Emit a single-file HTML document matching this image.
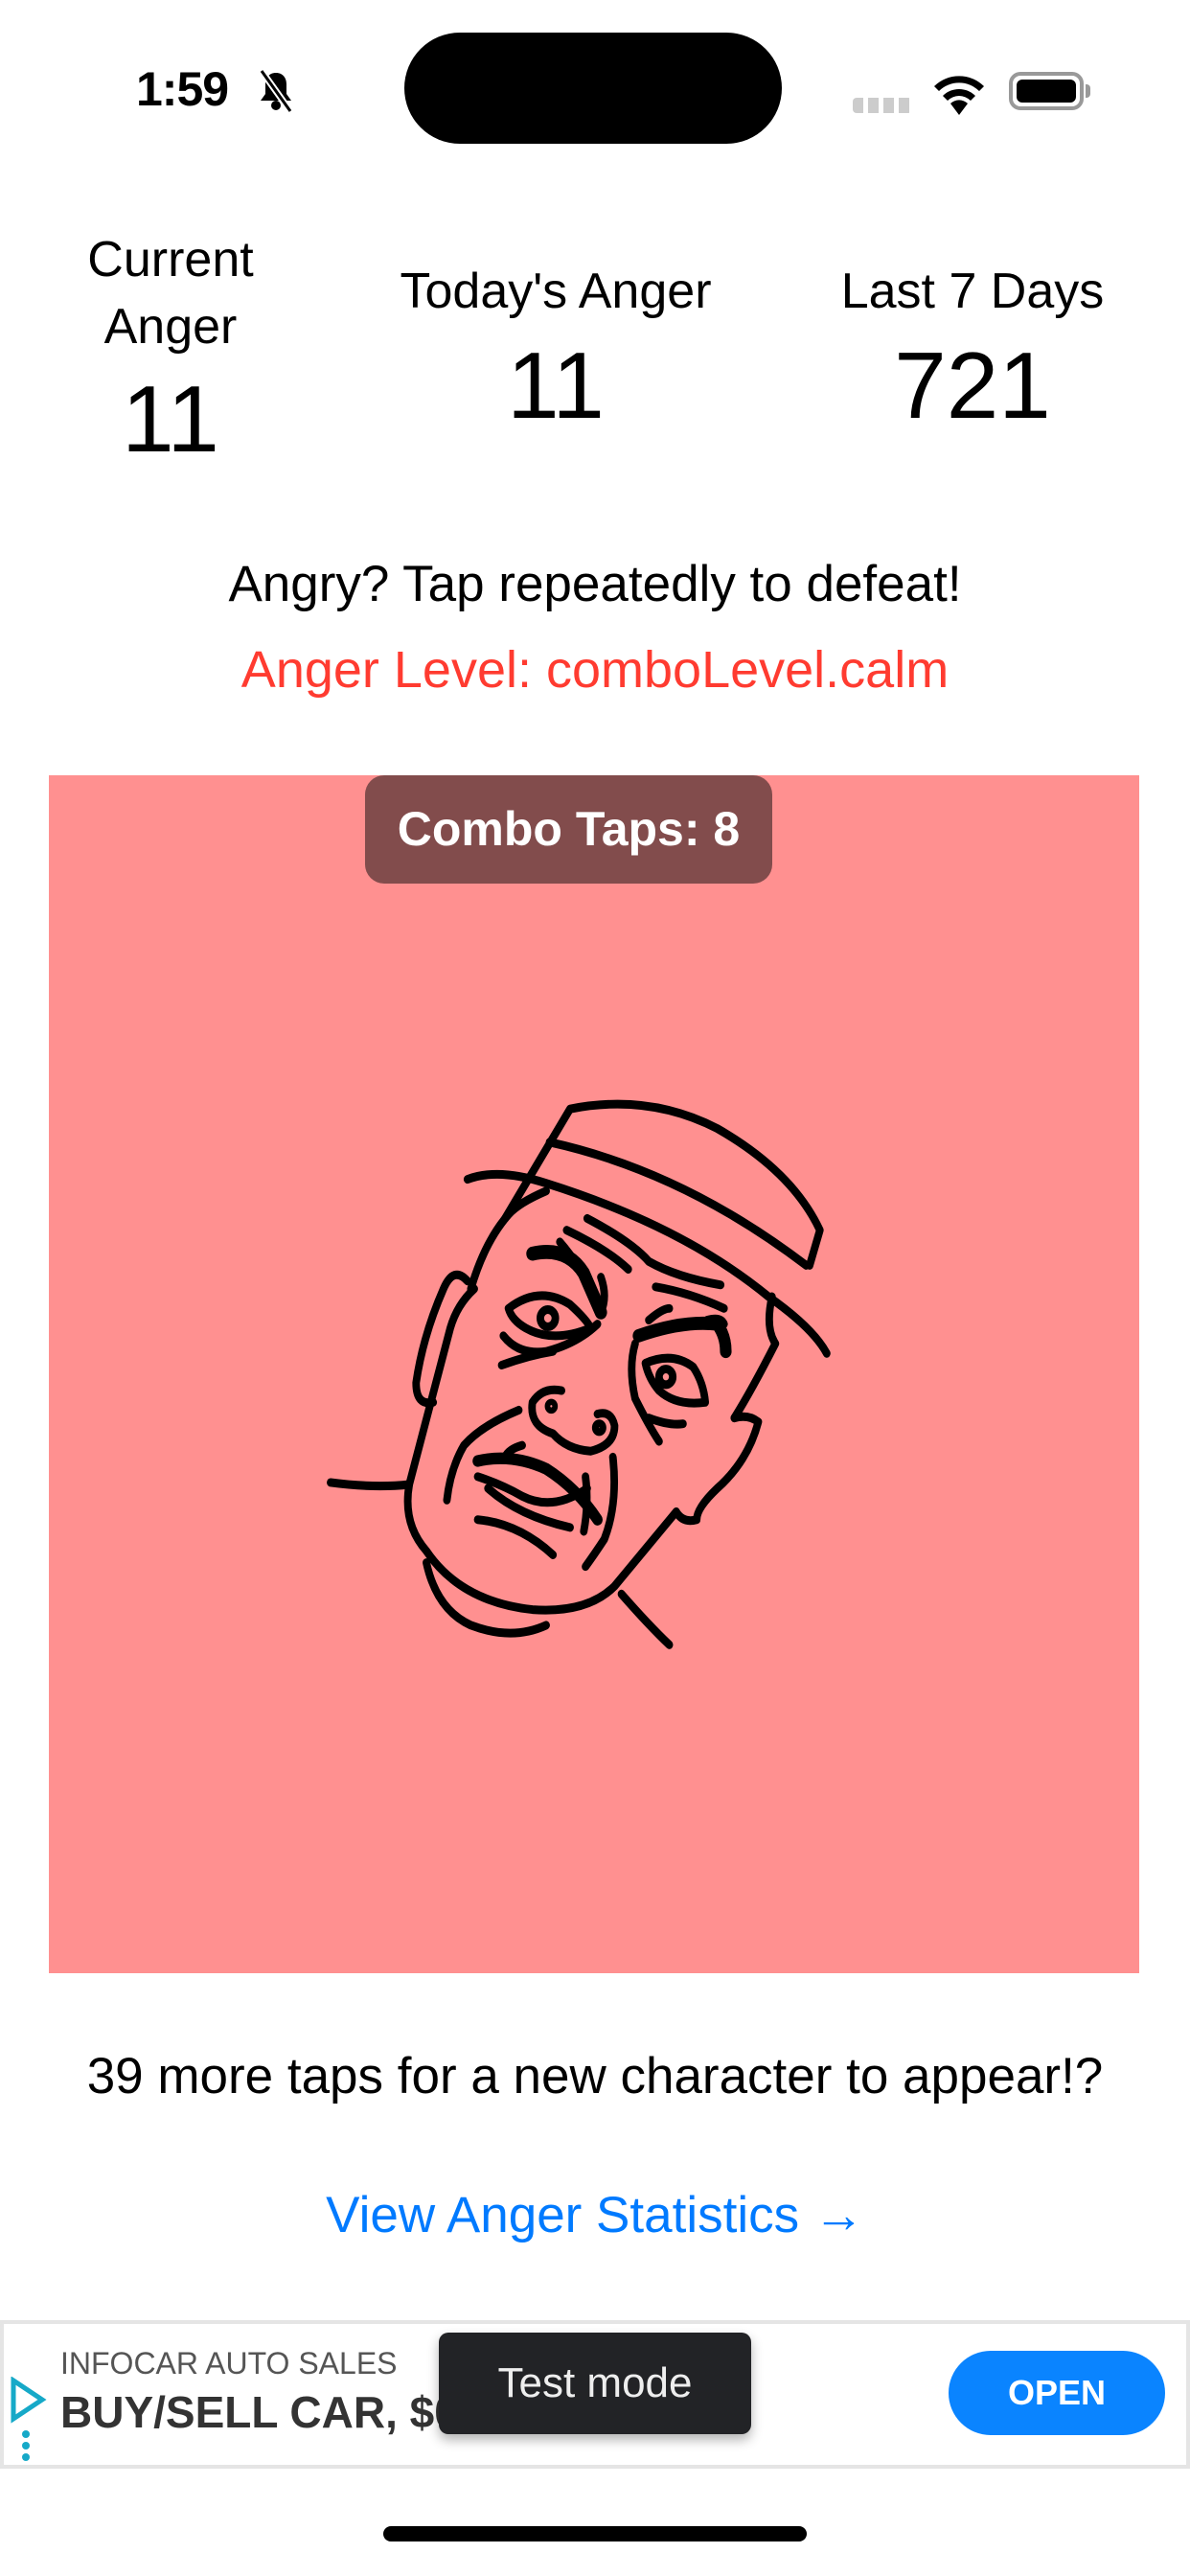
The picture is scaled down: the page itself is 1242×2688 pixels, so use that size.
<!DOCTYPE html>
<html><head><meta charset="utf-8"><style>
*{margin:0;padding:0;box-sizing:border-box}
body{width:1242px;height:2688px;background:#fff;position:relative;overflow:hidden;font-family:"Liberation Sans",sans-serif;color:#000}
.a{position:absolute}
.c{text-align:center}
</style></head><body>
<div class="a" style="left:142px;top:64px;font-size:50px;font-weight:bold;letter-spacing:-1px">1:59</div>
<svg class="a" style="left:265px;top:72px" width="46" height="46" viewBox="0 0 46 46"><path d="M23 4c-7 0-11 5-11 12v10l-5 7h32l-5-7V16c0-7-4-12-11-12z" fill="#000"/><circle cx="23" cy="38" r="5" fill="#000"/><path d="M8 2l30 42" stroke="#fff" stroke-width="7"/><path d="M8 2l30 42" stroke="#000" stroke-width="3"/></svg>
<div class="a" style="left:422px;top:34px;width:394px;height:116px;border-radius:58px;background:#000"></div>
<div class="a" style="left:890px;top:102px;width:62px;height:16px;background:repeating-linear-gradient(90deg,#ccc 0 11px,transparent 11px 16px);border-radius:4px"></div>
<svg class="a" style="left:972px;top:74px" width="58" height="46" viewBox="0 0 58 46"><path d="M29 46L20 34a13 13 0 0 1 18 0z" fill="#000"/><path d="M12 26a24 24 0 0 1 34 0l-5 5a17 17 0 0 0-24 0z" fill="#000"/><path d="M3 16a37 37 0 0 1 52 0l-5 5a30 30 0 0 0-42 0z" fill="#000"/></svg>
<div class="a" style="left:1053px;top:75px;width:78px;height:40px;border:4px solid #999;border-radius:12px;padding:4px"><div style="width:100%;height:100%;background:#000;border-radius:6px"></div></div>
<div class="a" style="left:1133px;top:88px;width:5px;height:14px;background:#999;border-radius:0 4px 4px 0"></div>

<div class="a c" style="left:30px;width:296px;top:236px;font-size:52px;line-height:70px">Current<br>Anger</div>
<div class="a c" style="left:30px;width:296px;top:382px;font-size:98px;line-height:110px">11</div>
<div class="a c" style="left:360px;width:440px;top:269px;font-size:52px;line-height:70px">Today's Anger</div>
<div class="a c" style="left:360px;width:440px;top:347px;font-size:98px;line-height:110px">11</div>
<div class="a c" style="left:810px;width:410px;top:269px;font-size:52px;line-height:70px">Last 7 Days</div>
<div class="a c" style="left:810px;width:410px;top:347px;font-size:98px;line-height:110px">721</div>

<div class="a c" style="left:0;width:1242px;top:575px;font-size:53px;line-height:70px">Angry? Tap repeatedly to defeat!</div>
<div class="a c" style="left:0;width:1242px;top:664px;font-size:54px;line-height:70px;color:#ff3b30">Anger Level: comboLevel.calm</div>

<div class="a" style="left:51px;top:809px;width:1138px;height:1250px;background:#ff9090"></div>
<div class="a c" style="left:381px;top:809px;width:425px;height:113px;background:#824c4c;border-radius:20px;color:#fff;font-weight:bold;font-size:50px;line-height:113px">Combo Taps: 8</div>

<svg class="a" style="left:320px;top:1100px" width="560" height="640" viewBox="0 0 1568 1568" preserveAspectRatio="none" fill="none" stroke="#000" stroke-width="22" stroke-linecap="round" stroke-linejoin="round">
<path d="M580 420L770 140Q1000 100 1200 190Q1420 300 1500 450L1470 540"/>
<path d="M710 225Q1100 300 1460 540"/>
<path d="M470 320Q560 290 700 330Q1100 440 1350 620Q1480 700 1520 765"/>
<path d="M700 350Q620 380 590 410Q520 480 480 600"/>
<path d="M470 580Q430 540 400 600Q340 720 320 840Q320 900 370 890"/>
<path d="M490 600Q440 640 420 700L300 1100Q280 1200 350 1270Q450 1400 660 1420Q820 1430 900 1360L1080 1170"/>
<path d="M70 1095Q200 1110 300 1100"/>
<path d="M1360 620Q1340 700 1370 740Q1300 860 1250 930"/>
<path d="M1250 930Q1290 920 1320 940Q1290 1040 1200 1110Q1140 1160 1140 1190Q1100 1200 1080 1170"/>
<path d="M350 1300Q380 1420 480 1460Q600 1500 700 1460"/>
<path d="M920 1380Q1000 1460 1060 1510"/>
<path d="M820 420Q950 480 1000 530Q1080 570 1210 590"/>
<path d="M760 450Q880 500 940 550"/>
<path d="M740 480Q800 540 840 620"/>
<path d="M1020 595Q1120 610 1220 650"/>
<path stroke-width="36" d="M660 510Q760 490 810 560Q850 640 860 660"/>
<path d="M860 570Q880 620 860 660"/>
<path stroke-width="34" d="M970 720Q1100 680 1200 690Q1225 720 1225 760"/>
<path d="M1000 680Q1040 650 1060 650M1170 680Q1210 670 1220 690"/>
<path d="M590 650Q680 590 770 640Q820 680 830 700Q720 740 640 700Q600 680 590 650Z"/>
<circle cx="705" cy="675" r="22"/>
<path d="M575 720Q620 770 700 760Q790 740 850 690"/>
<path d="M570 795Q650 770 720 760"/>
<path d="M990 790Q1070 760 1130 800Q1160 840 1165 890Q1080 900 1030 860Q1000 830 990 790Z"/>
<circle cx="1050" cy="825" r="20"/>
<path d="M960 740Q940 800 960 880Q1000 950 1030 990"/>
<path d="M1000 930Q1060 950 1100 945"/>
<path d="M745 860Q690 850 660 890Q650 950 720 970Q760 1010 830 1015Q900 1000 900 950Q890 910 850 920"/>
<circle cx="715" cy="900" r="8"/><circle cx="855" cy="955" r="10"/>
<path d="M620 910Q510 950 460 1000Q420 1060 410 1140"/>
<path d="M895 1030Q910 1150 870 1240Q840 1280 815 1310"/>
<path stroke-width="30" d="M500 1040Q600 1020 700 1060Q790 1110 850 1190"/>
<path d="M500 1080Q570 1100 630 1130Q720 1170 820 1110"/>
<path d="M530 1110Q620 1180 770 1210"/>
<path d="M500 1190Q620 1200 720 1280"/>
<path d="M630 1000Q590 1010 580 1030"/>
<path d="M815 1080Q825 1150 810 1220"/>
</svg>

<div class="a c" style="left:0;width:1242px;top:2132px;font-size:53px;line-height:70px">39 more taps for a new character to appear!?</div>
<div class="a c" style="left:0;width:1242px;top:2277px;font-size:53px;line-height:70px;color:#007aff">View Anger Statistics →</div>

<div class="a" style="left:0;top:2421px;width:1242px;height:155px;border:4px solid #e5e5e5;background:#fff"></div>
<svg class="a" style="left:10px;top:2480px" width="40" height="90" viewBox="0 0 40 90"><path d="M4 4L34 24L4 44Z" fill="none" stroke="#16a9c8" stroke-width="5"/><circle cx="17" cy="60" r="4" fill="#16a9c8"/><circle cx="17" cy="72" r="4" fill="#16a9c8"/><circle cx="17" cy="84" r="4" fill="#16a9c8"/></svg>
<div class="a" style="left:63px;top:2448px;font-size:32px;color:#555">INFOCAR AUTO SALES</div>
<div class="a" style="left:63px;top:2490px;font-size:46px;color:#333;font-weight:bold">BUY/SELL CAR, $0</div>
<div class="a c" style="left:458px;top:2434px;width:326px;height:106px;background:#222326;border-radius:10px;color:#eee;font-size:44px;line-height:106px;box-shadow:0 6px 12px rgba(0,0,0,.3)">Test mode</div>
<div class="a c" style="left:990px;top:2453px;width:226px;height:88px;background:#0a84ff;border-radius:44px;color:#fff;font-size:36px;font-weight:bold;line-height:88px">OPEN</div>
<div class="a" style="left:400px;top:2636px;width:442px;height:16px;background:#000;border-radius:8px"></div>
</body></html>
